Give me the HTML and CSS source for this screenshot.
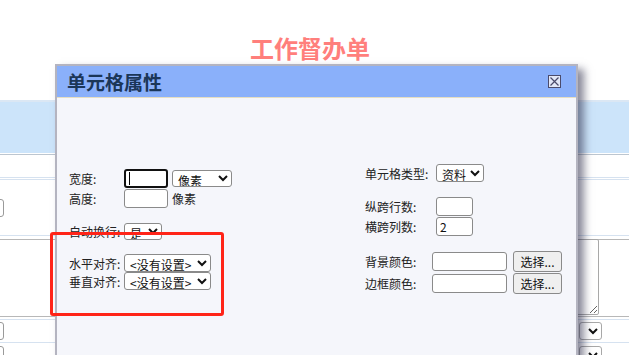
FILE: index.html
```html
<!DOCTYPE html>
<html lang="zh-CN">
<head>
    <meta charset="UTF-8">
    <meta name="viewport" content="width=device-width, initial-scale=1.0">
    <title>工作督办单</title>
    <link rel="stylesheet" href="styles.css">
</head>
<body>

    <div class="page">
        <h1 class="page-title">工作督办单</h1>

        <div class="sheet">
            <div class="sheet-head"></div>
            <div class="sheet-row row-a"></div>
            <div class="sheet-row row-b">
                <div class="cell-left"><input type="text" class="bg-input"></div>
            </div>
            <div class="sheet-row row-c">
                <div class="cell-right"><textarea class="bg-area"></textarea></div>
            </div>
            <div class="sheet-row row-d">
                <div class="cell-left"><input type="text" class="bg-input"></div>
                <div class="cell-right"><select class="bg-select"><option></option></select></div>
            </div>
            <div class="sheet-row row-e">
                <div class="cell-left"><input type="text" class="bg-input"></div>
                <div class="cell-right"><select class="bg-select"><option></option></select></div>
            </div>
        </div>

        <!-- janela de propriedades da célula -->
        <div class="dialog">
            <div class="dialog-title">
                <span>单元格属性</span>
                <svg class="dialog-close" width="13" height="13" viewBox="0 0 13 13">
                    <rect x="0.5" y="0.5" width="12" height="12" fill="#e2e7f7" stroke="#4b4b6b"/>
                    <path d="M2.5 2.5 L10.5 10.5 M10.5 2.5 L2.5 10.5" stroke="#4b4b6b" stroke-width="1.2"/>
                </svg>
            </div>
            <div class="dialog-body">
                <div class="col col-left">
                    <div class="field h20">
                        <label>宽度:</label>
                        <span class="focus-wrap"><input type="text" class="num focused"></span>
                        <select class="sel sel-unit"><option>像素</option><option>百分比</option></select>
                    </div>
                    <div class="field h20">
                        <label>高度:</label>
                        <input type="text" class="num">
                        <span class="unit">像素</span>
                    </div>
                    <div class="field h18 gap">
                        <label>自动换行:</label>
                        <select class="sel sel-yes"><option>是</option><option>否</option></select>
                    </div>
                    <div class="field h18 gap">
                        <label>水平对齐:</label>
                        <select class="sel sel-align"><option>&lt;没有设置&gt;</option></select>
                    </div>
                    <div class="field h18">
                        <label>垂直对齐:</label>
                        <select class="sel sel-align"><option>&lt;没有设置&gt;</option></select>
                    </div>
                </div>

                <div class="col col-right">
                    <div class="field h18">
                        <label class="wide">单元格类型:</label>
                        <select class="sel sel-type"><option>资料</option></select>
                    </div>
                    <div class="field h20 gap">
                        <label class="wide">纵跨行数:</label>
                        <input type="text" class="span-num">
                    </div>
                    <div class="field h20">
                        <label class="wide">横跨列数:</label>
                        <input type="text" class="span-num" value="2">
                    </div>
                    <div class="field h22 gap">
                        <label class="mid">背景颜色:</label>
                        <input type="text" class="color">
                        <button class="pick">选择...</button>
                    </div>
                    <div class="field h22">
                        <label class="mid">边框颜色:</label>
                        <input type="text" class="color">
                        <button class="pick">选择...</button>
                    </div>
                </div>
            </div>
        </div>

        <div class="mark"></div>
    </div>

</body>
</html>
```

FILE: styles.css
```css
body {
    margin: 0;
    padding: 0;
    font-family: "Noto Sans CJK SC", "Noto Sans", sans-serif;
    background-color: #fff;
}

.page {
    position: relative;
    height: 355px;
    overflow: hidden;
}

.page-title {
    margin: 0;
    height: 100px;
    box-sizing: border-box;
    padding: 35px 9px 0 0;
    text-align: center;
    font-size: 24px;
    line-height: 26px;
    font-weight: bold;
    color: #ff7f7c;
}

/* Formulário do fundo */
.sheet {
    border-top: 2px solid #dbe7f4;
}

.sheet-head {
    height: 51px;
    background-color: #cce4fa;
}

.sheet-row {
    display: flex;
    justify-content: space-between;
}

.row-a {
    height: 22px;
    border-top: 1px solid #bcc6d0;
    border-bottom: 3px double #d6e2f0;
    margin-top: 1px;
}

.row-b {
    height: 55px;
    align-items: center;
    border-bottom: 1px solid #d6e2f0;
}

.row-c {
    height: 76px;
    margin-top: 3px;
    border-top: 1px solid #b8b8b8;
    border-bottom: 1px solid #b8b8b8;
}

.row-d {
    height: 22px;
    margin-top: 2px;
    border-top: 1px solid #d6e2f0;
    border-bottom: 1px solid #d6e2f0;
    align-items: center;
}

.row-e {
    height: 22px;
    margin-top: 1px;
    align-items: center;
}

.cell-left {
    width: 4px;
    display: flex;
    justify-content: flex-end;
}

.cell-right {
    display: flex;
    padding-right: 27px;
}

.row-c .cell-right {
    margin-left: auto;
    padding-right: 30px;
}

.bg-input {
    flex-shrink: 0;
    width: 40px;
    height: 18px;
    box-sizing: border-box;
    border: 1px solid #9a9a9a;
    border-radius: 3px;
}

.bg-area {
    width: 60px;
    height: 76px;
    box-sizing: border-box;
    border: 1px solid #a8a8a8;
    border-radius: 2px;
    margin-top: -1px;
}

.bg-select {
    width: 23px;
    height: 18px;
    border: 1px solid #a8a8a8;
    border-radius: 3px;
    background-color: #fff;
}

/* Janela */
.dialog {
    position: absolute;
    left: 55px;
    top: 64px;
    width: 523px;
    height: 320px;
    box-sizing: border-box;
    border: 2px solid #b4b4c0;
    background-color: #f5f6fb;
    box-shadow: 6px 5px 8px rgba(40, 40, 70, 0.55);
}

.dialog-title {
    display: flex;
    justify-content: space-between;
    align-items: center;
    height: 31px;
    padding: 0 15px 0 10px;
    background-color: #8ab0fa;
    border-bottom: 1px solid #e6dec2;
    font-size: 19px;
    font-weight: bold;
    color: #1b3658;
}

.dialog-close {
    display: block;
}

.dialog-body {
    display: flex;
    padding-left: 12px;
    font-size: 12px;
    color: #222;
}

.col-left {
    width: 296px;
    padding-top: 70px;
}

.col-right {
    padding-top: 66px;
}

.field {
    display: flex;
    align-items: center;
}

.h18 { height: 18px; }
.h20 { height: 20px; }
.h22 { height: 22px; }

.gap {
    margin-top: 14px;
}

.field label {
    width: 55px;
    flex-shrink: 0;
}

.field label.wide {
    width: 71px;
}

.field label.mid {
    width: 67px;
}

input, select, button {
    font-family: "Noto Sans CJK SC", "Noto Sans", sans-serif;
    font-size: 12px;
    color: #111;
    box-sizing: border-box;
    margin: 0;
}

.num {
    width: 44px;
    height: 19px;
    border: 1px solid #8a8a8a;
    border-radius: 3px;
    background-color: #fff;
}

.focus-wrap {
    position: relative;
    display: flex;
}

.num.focused {
    border: 2px solid #111;
}

.focus-wrap::after {
    content: "";
    position: absolute;
    left: 5px;
    top: 3px;
    width: 1px;
    height: 13px;
    background-color: #000;
}

.unit {
    margin-left: 4px;
}

.sel {
    height: 18px;
    padding: 0 0 0 1px;
    border: 1px solid #8a8a8a;
    border-radius: 3px;
    background-color: #fff;
}

.sel-unit {
    width: 60px;
    height: 17px;
    margin-left: 4px;
}

.sel-yes {
    width: 38px;
    height: 17px;
}

.sel-align {
    width: 87px;
}

.sel-type {
    width: 48px;
}

.span-num {
    width: 37px;
    height: 19px;
    border: 1px solid #8a8a8a;
    border-radius: 3px;
    background-color: #fff;
    padding: 0 3px;
}

.color {
    width: 75px;
    height: 19px;
    border: 1px solid #8a8a8a;
    border-radius: 3px;
    background-color: #fff;
}

.pick {
    width: 49px;
    height: 21px;
    margin-left: 6px;
    padding: 0;
    border: 1px solid #8a8a8a;
    border-radius: 3px;
    background-color: #efefef;
}

/* Marcação vermelha */
.mark {
    position: absolute;
    left: 50px;
    top: 232px;
    width: 174px;
    height: 84px;
    box-sizing: border-box;
    border: 3px solid #ff2418;
    border-radius: 3px;
}
```
